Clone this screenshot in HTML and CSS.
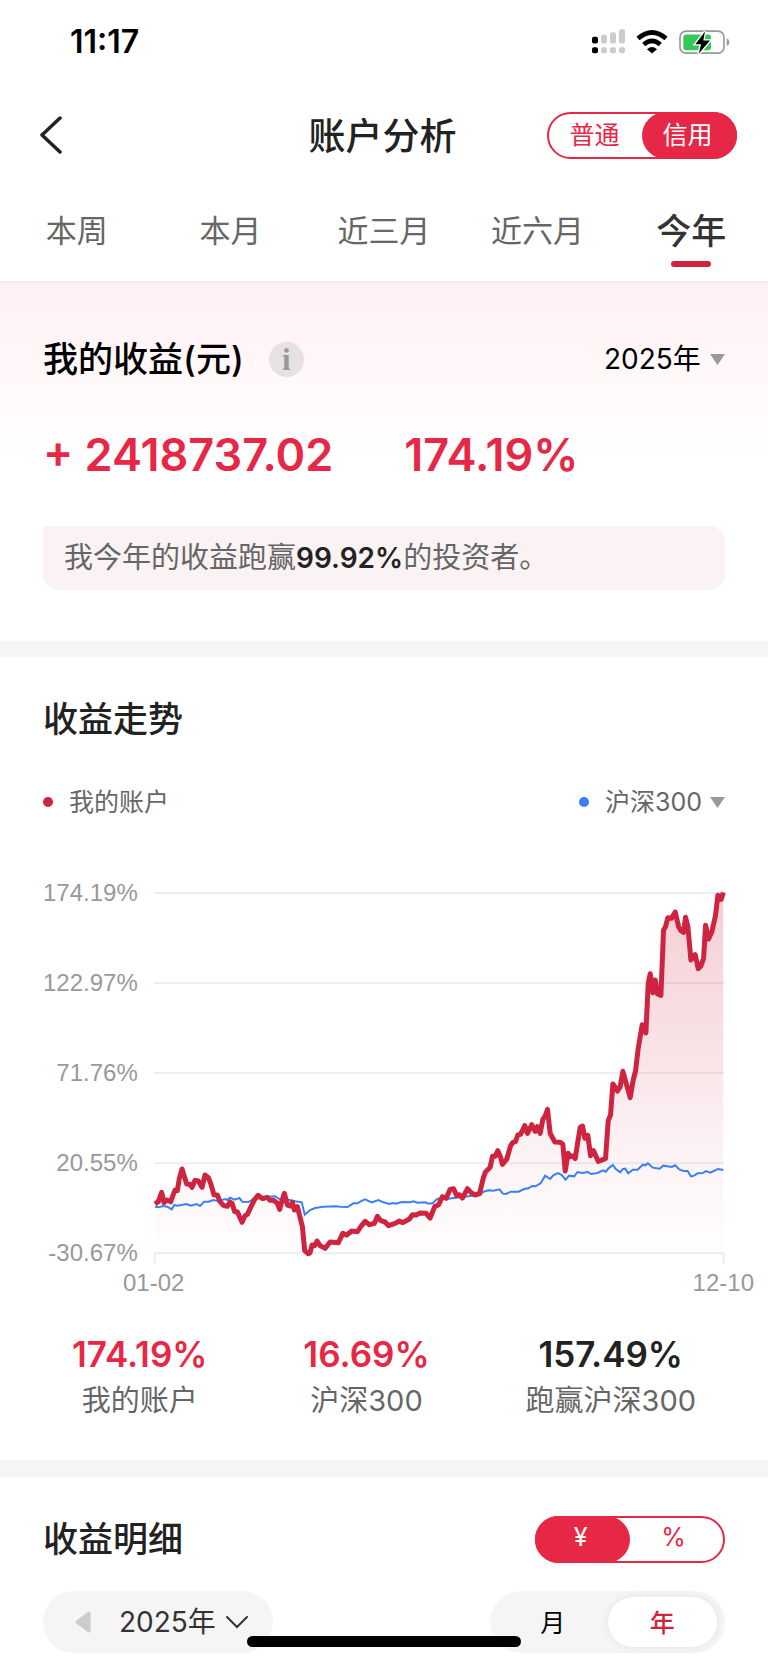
FILE: index.html
```html
<!DOCTYPE html>
<html lang="zh-CN">
<head>
  <meta charset="UTF-8" />
  <meta name="viewport" content="width=device-width, initial-scale=1.0">
  <title>账户分析</title>
  <link rel="stylesheet" href="styles.css">
</head>
<body>
  <header class="top">
    <div class="status-bar">
      <span class="time">11:17</span>
      <div class="status-icons">
        <svg width="33" height="25" viewBox="624 84 99 74" aria-hidden="true">
          <g fill="#000">
            <rect x="624" y="107" width="18" height="20" rx="6"/>
            <rect x="624" y="138" width="18" height="18" rx="6"/>
          </g>
          <g fill="#ccc">
            <rect x="651" y="101" width="18" height="26" rx="6"/>
            <rect x="678" y="93" width="18" height="34" rx="6"/>
            <rect x="705" y="84" width="18" height="43" rx="6"/>
            <rect x="651" y="138" width="18" height="18" rx="6"/>
            <rect x="678" y="138" width="18" height="18" rx="6"/>
            <rect x="705" y="138" width="18" height="18" rx="6"/>
          </g>
        </svg>
        <svg width="32" height="25" viewBox="755 84 96 74" aria-hidden="true">
          <path d="M761 112Q803 76 845 112" fill="none" stroke="#000" stroke-width="14"/>
          <path d="M778 130Q803 108 828 130" fill="none" stroke="#000" stroke-width="14"/>
          <path d="M803 157L788 144Q803 131 818 144Z"/>
        </svg>
        <svg width="51" height="25" viewBox="884 84 153 74" aria-hidden="true">
          <rect x="887" y="90" width="132" height="66" rx="18" fill="none" stroke="#999" stroke-width="5"/>
          <path d="M1027 111Q1035 114 1035 123T1027 134Z" fill="#999"/>
          <rect x="897" y="100" width="83" height="47" rx="9" fill="#34c759"/>
          <path d="M962 91L933 129H950L943 158L977 118H957Z" stroke="#fff" stroke-width="8" paint-order="stroke"/>
        </svg>
      </div>
    </div>

    <div class="nav-bar">
      <button class="back" aria-label="返回">
        <svg width="24" height="40" viewBox="0 0 24 40"><path d="M22 3L4 20L22 37" fill="none" stroke="#222" stroke-width="3.5" stroke-linecap="round" stroke-linejoin="round"/></svg>
      </button>
      <h1>账户分析</h1>
      <div class="switch">
        <button>普通</button>
        <button class="on">信用</button>
      </div>
    </div>

    <nav class="tabs">
      <button>本周</button>
      <button>本月</button>
      <button>近三月</button>
      <button>近六月</button>
      <button class="active">今年</button>
    </nav>
  </header>

  <section class="earnings">
    <div class="row">
      <h2 class="dark">我的收益(元)</h2>
      <button class="info" aria-label="说明">i</button>
      <label class="picker">
        <select aria-label="年份"><option>2025年</option></select>
        <svg width="15" height="11" viewBox="0 0 15 11"><path d="M0 0H15L7.5 11Z" fill="#999"/></svg>
      </label>
    </div>
    <div class="amounts">
      <span>+ 2418737.02</span>
      <span>174.19%</span>
    </div>
    <p class="note">我今年的收益跑赢<strong>99.92%</strong>的投资者。</p>
  </section>

  <section class="trend">
    <h2>收益走势</h2>
    <div class="legend">
      <span class="legend-item"><i class="dot red"></i>我的账户</span>
      <label class="legend-item"><i class="dot blue"></i>
        <select aria-label="对比指数"><option>沪深300</option></select>
        <svg width="15" height="11" viewBox="0 0 15 11"><path d="M0 0H15L7.5 11Z" fill="#999"/></svg>
      </label>
    </div>

    <div class="chart">
      <div class="y-axis">
        <span>174.19%</span>
        <span>122.97%</span>
        <span>71.76%</span>
        <span>20.55%</span>
        <span>-30.67%</span>
      </div>
      <svg class="plot" viewBox="0 0 1710 1152" preserveAspectRatio="none" role="img" aria-label="收益走势图">
        <defs>
          <linearGradient id="area" x1="0" y1="0" x2="0" y2="1">
            <stop offset="0" stop-color="#cf2440" stop-opacity="0.22"/>
            <stop offset="0.3" stop-color="#cf2440" stop-opacity="0.16"/>
            <stop offset="0.75" stop-color="#cf2440" stop-opacity="0.05"/>
            <stop offset="1" stop-color="#cf2440" stop-opacity="0.01"/>
          </linearGradient>
        </defs>
        <path class="grid-line" d="M0 36H1710M0 306H1710M0 576H1710M0 847H1710M2 1150V1117H1708V1150"/>
        <path fill="url(#area)" d="M3 1117L3 969 23 934 30 965 50 962 63 927 70 929 84 864 98 909 114 919 123 898 144 919 153 882 163 890 180 942 190 942 208 973 228 963 242 992 264 1024 291 977 312 943 358 958 377 985 391 937 400 972 421 987 430 977 445 1037 452 1109 462 1118 474 1092 489 1080 513 1102 528 1083 553 1085 566 1057 610 1052 633 1021 646 1031 670 1006 703 1034 766 1014 775 1001 816 997 828 1011 842 976 865 947 876 952 898 923 908 944 925 951 940 923 963 942 976 938 994 873 1008 859 1015 826 1031 809 1045 850 1058 834 1076 784 1099 760 1112 734 1120 757 1133 731 1143 751 1158 757 1166 715 1180 685 1188 757 1202 783 1226 790 1233 870 1242 817 1263 833 1278 739 1285 735 1292 772 1301 763 1309 824 1318 809 1332 841 1354 833 1362 719 1369 702 1376 609 1390 630 1406 571 1428 650 1444 570 1452 502 1464 431 1475 456 1482 307 1488 278 1496 335 1503 297 1510 339 1520 343 1528 147 1541 110 1563 93 1573 137 1588 154 1594 109 1601 137 1610 237 1623 221 1632 263 1648 232 1654 133 1663 174 1673 152 1684 102 1691 43 1701 55 1707 34V1117Z"/>
        <polyline class="line-index" points="3,977 15,979 26,975 40,977 53,985 61,972 70,974 98,969 110,974 128,969 138,975 150,962 163,962 178,957 190,960 203,957 214,954 220,957 228,950 242,956 256,951 265,962 283,963 298,954 318,952 343,947 363,946 376,954 390,954 408,957 423,961 443,964 452,1001 468,987 483,981 508,977 545,976 558,977 580,978 598,967 610,967 620,961 633,955 653,964 673,957 688,964 706,969 716,966 726,968 743,963 768,964 778,961 790,965 813,964 823,968 836,966 850,953 863,952 878,954 898,951 918,949 948,945 978,942 986,933 1003,928 1018,929 1036,925 1046,938 1055,939 1070,932 1093,932 1110,924 1123,922 1134,915 1144,916 1160,906 1173,884 1188,894 1198,882 1212,876 1223,882 1234,896 1245,884 1260,886 1270,873 1283,876 1301,873 1310,879 1330,876 1346,868 1355,872 1363,862 1376,852 1385,864 1398,874 1406,864 1413,863 1422,877 1436,866 1450,866 1466,851 1473,853 1481,847 1496,860 1516,863 1527,854 1553,858 1563,853 1575,865 1588,870 1600,870 1610,886 1620,884 1630,877 1646,876 1655,870 1668,875 1691,864 1707,867"/>
        <polyline class="line-mine" points="3,969 13,962 23,934 30,965 38,957 50,962 63,927 70,929 76,892 84,864 98,909 108,910 114,919 123,898 133,900 144,919 153,882 163,890 170,907 180,942 190,942 198,962 208,973 220,976 228,963 234,967 242,992 250,992 264,1024 273,1004 280,1000 291,977 302,955 312,943 326,953 340,949 348,958 358,958 370,967 377,985 383,962 391,937 400,972 410,975 415,964 421,987 430,977 438,1009 445,1037 452,1109 462,1118 468,1115 474,1092 482,1094 489,1080 498,1094 513,1102 528,1083 553,1085 566,1057 578,1062 593,1050 610,1052 620,1037 633,1021 646,1031 661,1027 670,1006 680,1019 693,1023 703,1034 723,1027 736,1020 746,1025 766,1014 775,1001 786,1002 798,996 816,997 828,1011 842,976 853,972 865,947 876,952 888,925 898,923 908,944 916,941 925,951 940,923 951,935 963,942 976,938 988,889 994,873 1008,859 1015,826 1023,826 1031,809 1038,825 1045,850 1058,834 1069,795 1076,784 1084,782 1091,762 1099,760 1112,734 1120,757 1133,731 1143,751 1150,737 1158,757 1166,715 1173,705 1180,685 1188,757 1202,783 1218,784 1226,790 1233,870 1242,817 1248,827 1256,825 1263,833 1271,782 1278,739 1285,735 1292,772 1301,763 1309,824 1318,809 1332,841 1354,833 1362,719 1369,702 1376,609 1390,630 1398,617 1406,571 1416,607 1428,650 1437,597 1444,570 1452,502 1464,431 1475,456 1482,307 1488,278 1496,335 1503,297 1510,339 1520,343 1528,147 1534,137 1541,110 1552,112 1563,93 1573,137 1580,149 1588,154 1594,109 1601,137 1610,237 1623,221 1632,263 1640,255 1648,232 1654,133 1663,174 1673,152 1684,102 1691,43 1701,55 1707,34"/>
      </svg>
    </div>
    <div class="x-axis"><span>01-02</span><span>12-10</span></div>

    <div class="stats">
      <div class="stat"><strong>174.19%</strong><span>我的账户</span></div>
      <div class="stat"><strong>16.69%</strong><span>沪深300</span></div>
      <div class="stat black"><strong>157.49%</strong><span>跑赢沪深300</span></div>
    </div>
  </section>

  <section class="details">
    <div class="row">
      <h2>收益明细</h2>
      <div class="switch">
        <button class="on">¥</button>
        <button>%</button>
      </div>
    </div>
    <div class="filters">
      <div class="year">
        <button class="prev" aria-label="上一年">
          <svg width="16" height="22" viewBox="0 0 16 22"><path d="M2 11L14 2V20Z" fill="#ccc" stroke="#ccc" stroke-width="3" stroke-linejoin="round"/></svg>
        </button>
        <label class="year-picker">
          <select aria-label="明细年份"><option>2025年</option></select>
          <svg width="24" height="14" viewBox="0 0 24 14"><path d="M2 2L12 12L22 2" fill="none" stroke="#333" stroke-width="2" stroke-linecap="round"/></svg>
        </label>
      </div>
      <div class="period">
        <button>月</button>
        <button class="on">年</button>
      </div>
    </div>
  </section>

  <div class="home-indicator"></div>
</body>
</html>
```

FILE: styles.css
```css
* {
  box-sizing: border-box;
}
body {
  margin: 0;
  position: relative;
  background: #f5f5f5;
  color: #222;
  font-family: Inter, 'Noto Sans CJK SC', sans-serif;
  font-size: 29px;
}
button,
select {
  margin: 0;
  padding: 0;
  border: none;
  background: none;
  color: inherit;
  font: inherit;
  cursor: pointer;
}
select {
  appearance: none;
}
svg {
  display: block;
}
h1,
h2,
p {
  margin: 0;
}
h1 {
  padding-bottom: 2px;
  font-size: 37px;
  font-weight: 500;
}
h2 {
  font-size: 35px;
  font-weight: 500;
  line-height: 52px;
}
h2.dark {
  color: #000;
}
section {
  background: white;
  padding: 36px 43px 0;
}
.row {
  display: flex;
  align-items: center;
}

/* header */
.top {
  background: white;
  border-bottom: 2px solid #eee;
}
.status-bar {
  display: flex;
  align-items: center;
  justify-content: space-between;
  height: 82px;
  padding: 0 38px 0 70px;
}
.time {
  color: #000;
  font-size: 32px;
  font-weight: 600;
}
.status-icons {
  display: flex;
  gap: 11px;
}
.nav-bar {
  display: grid;
  grid-template-columns: 1fr auto 1fr;
  align-items: center;
  height: 106px;
  padding: 0 31px 0 28px;
}
.back {
  justify-self: start;
  padding: 0 10px;
}
.switch {
  display: flex;
  justify-self: end;
  width: 190px;
  height: 47px;
  margin-left: auto;
  border: 2px solid #e62846;
  border-radius: 24px;
  color: #e62846;
  font-size: 25px;
}
.switch button {
  flex: 1;
  padding: 0 4px 4px 0;
}
.switch .on {
  margin: -2px;
  border-radius: 24px;
  background: #e62846;
  color: white;
}
.tabs {
  display: grid;
  grid-template-columns: repeat(5, 1fr);
  height: 93px;
  color: #666;
  font-size: 31px;
}
.tabs button {
  position: relative;
  padding-bottom: 12px;
}
.tabs .active {
  color: #333;
  font-size: 35px;
  font-weight: 500;
}
.tabs .active::after {
  content: '';
  position: absolute;
  left: 50%;
  bottom: 14px;
  width: 40px;
  height: 6px;
  margin-left: -20px;
  border-radius: 3px;
  background: #cf2440;
}

/* earnings */
.earnings {
  padding-top: 50px;
  padding-bottom: 51px;
  background: linear-gradient(#fff0f2, white 180px);
}
.info {
  width: 35px;
  height: 35px;
  margin-left: 25px;
  border-radius: 50%;
  background: #e6e1e2;
  color: #999;
  font-family: 'Liberation Serif', serif;
  font-size: 31px;
  font-weight: 700;
  line-height: 35px;
}
.picker {
  display: flex;
  align-items: center;
  gap: 9px;
  margin-left: auto;
  color: #000;
  font-size: 28px;
}
.amounts {
  display: flex;
  gap: 71px;
  margin-top: 44px;
  color: #e62846;
  font-size: 45px;
  font-weight: 600;
  line-height: 52px;
}
.note {
  margin-top: 45px;
  padding: 0 21px;
  border-radius: 2px 16px 16px 16px;
  background: #fbf2f3;
  color: #666;
  line-height: 64px;
}
.note strong {
  color: #222;
  font-size: 28px;
  font-weight: 600;
}

/* trend */
.trend {
  margin-top: 16px;
  padding-bottom: 39px;
}
.legend {
  display: flex;
  justify-content: space-between;
  margin-top: 39px;
  color: #666;
  font-size: 25px;
  line-height: 36px;
}
.legend-item {
  display: flex;
  align-items: center;
}
.legend-item svg {
  margin-left: 8px;
}
.dot {
  width: 10px;
  height: 10px;
  margin-right: 16px;
  border-radius: 50%;
}
.red {
  background: #cf2440;
}
.blue {
  background: #3a80f0;
}
.chart {
  display: flex;
  gap: 16px;
  height: 384px;
  margin-top: 61px;
  padding-right: 1px;
}
.y-axis {
  display: flex;
  flex-direction: column;
  justify-content: space-between;
  text-align: right;
}
.y-axis,
.x-axis {
  color: #999;
  font-family: 'Liberation Sans', sans-serif;
  font-size: 24px;
  line-height: 24px;
}
.plot {
  flex: 1;
  min-width: 0;
  height: 100%;
  overflow: visible;
}
.plot path,
.plot polyline {
  vector-effect: non-scaling-stroke;
}
.plot polyline {
  fill: none;
}
.grid-line {
  fill: none;
  stroke: #eee;
  stroke-width: 2;
}
.line-index {
  stroke: #3a80f0;
  stroke-width: 2;
}
.line-mine {
  stroke: #cf2440;
  stroke-width: 5;
  stroke-linejoin: round;
}
.x-axis {
  display: flex;
  justify-content: space-between;
  margin: 6px -29px 0 80px;
}
.stats {
  display: flex;
  justify-content: space-between;
  margin-top: 37px;
  padding: 0 29px;
}
.stat {
  display: flex;
  flex-direction: column;
  align-items: center;
  gap: 5px;
  color: #666;
  line-height: 40px;
}
.stat strong {
  color: #e62846;
  font-size: 35px;
  font-weight: 600;
  line-height: 44px;
}
.stat.black strong {
  color: #222;
}

/* details */
.details {
  margin-top: 17px;
  padding-bottom: 10px;
}
.filters {
  display: flex;
  justify-content: space-between;
  margin-top: 26px;
}
.year,
.period {
  display: flex;
  align-items: center;
  height: 62px;
  border-radius: 31px;
  background: #f5f5f5;
}
.year {
  gap: 28px;
  padding: 0 24px 0 32px;
  color: #333;
  font-size: 28px;
}
.year-picker {
  display: flex;
  align-items: center;
  gap: 9px;
}
.period {
  width: 235px;
  padding: 6px 8px;
  color: #000;
  font-size: 25px;
}
.period button {
  flex: 1;
  height: 100%;
  padding-bottom: 3px;
}
.period .on {
  border-radius: 25px;
  background: white;
  box-shadow: 0 0 8px rgba(0, 0, 0, 0.08);
  color: #cf2440;
  font-weight: 500;
}
.home-indicator {
  position: absolute;
  left: 50%;
  bottom: 16px;
  width: 274px;
  height: 11px;
  margin-left: -137px;
  border-radius: 6px;
  background: #000;
}
```
